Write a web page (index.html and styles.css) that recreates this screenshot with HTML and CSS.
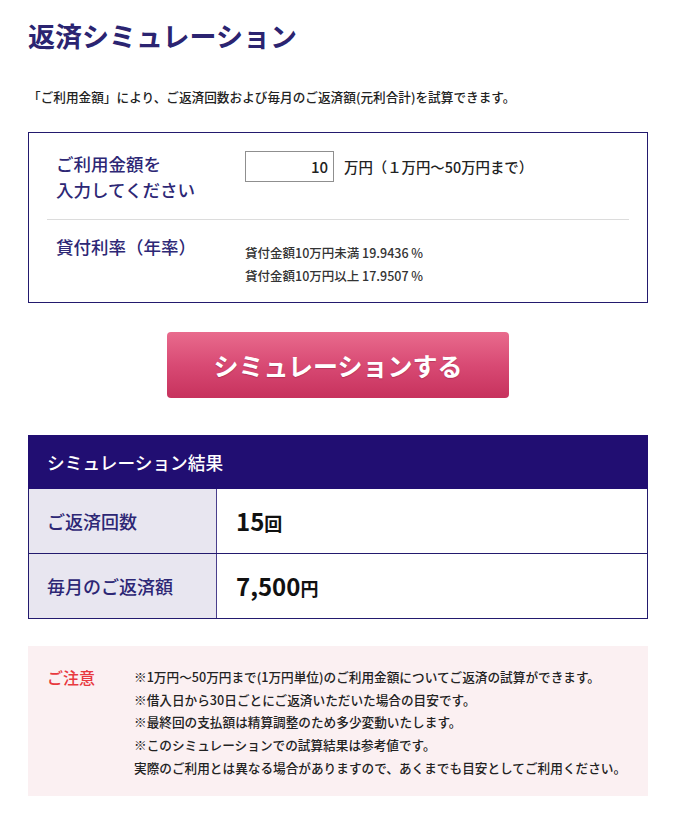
FILE: index.html
```html
<!DOCTYPE html>
<html lang="ja">
<head>
<meta charset="utf-8">
<title>返済シミュレーション</title>
<link rel="stylesheet" href="styles.css">
</head>
<body>
<div class="page">
  <h1 class="title">返済シミュレーション</h1>
  <p class="lead">「ご利用金額」により、ご返済回数および毎月のご返済額(元利合計)を試算できます。</p>

  <div class="form-box">
    <div class="form-row first">
      <div class="form-label">ご利用金額を<br>入力してください</div>
      <div class="form-field">
        <input class="amount" type="text" value="10">
        <span class="unit">万円（１万円〜50万円まで）</span>
      </div>
    </div>
    <div class="form-row second">
      <div class="form-label">貸付利率（年率）</div>
      <div class="rates">
        <div>貸付金額10万円未満 19.9436 %</div>
        <div>貸付金額10万円以上 17.9507 %</div>
      </div>
    </div>
  </div>

  <div class="btn-wrap">
    <button class="sim-btn" type="button">シミュレーションする</button>
  </div>

  <div class="result">
    <div class="result-head">シミュレーション結果</div>
    <div class="result-row">
      <div class="result-label">ご返済回数</div>
      <div class="result-value"><span class="num">15</span><span class="suffix">回</span></div>
    </div>
    <div class="result-row">
      <div class="result-label">毎月のご返済額</div>
      <div class="result-value"><span class="num">7,500</span><span class="suffix">円</span></div>
    </div>
  </div>

  <div class="notice">
    <div class="notice-title">ご注意</div>
    <div class="notice-body">
      <div>※1万円〜50万円まで(1万円単位)のご利用金額についてご返済の試算ができます。</div>
      <div>※借入日から30日ごとにご返済いただいた場合の目安です。</div>
      <div>※最終回の支払額は精算調整のため多少変動いたします。</div>
      <div>※このシミュレーションでの試算結果は参考値です。</div>
      <div>実際のご利用とは異なる場合がありますので、あくまでも目安としてご利用ください。</div>
    </div>
  </div>
</div>
</body>
</html>
```

FILE: styles.css
```css
* { box-sizing: border-box; }
html, body {
  margin: 0;
  padding: 0;
  background: #fff;
}
body {
  font-family: "Noto Sans CJK JP", "Noto Sans", sans-serif;
  color: #222;
}
.page {
  width: 620px;
  margin-left: 28px;
  padding-top: 16px;
}
.title {
  margin: 0;
  font-size: 27px;
  line-height: 40px;
  font-weight: 700;
  color: #2b2471;
}
.lead {
  margin: 32px 0 0;
  font-size: 12.65px;
  line-height: 18px;
  font-weight: 500;
  color: #222;
}
.form-box {
  margin-top: 26px;
  border: 1px solid #231a6e;
  padding: 0 18px;
}
.form-row {
  display: flex;
  align-items: flex-start;
}
.form-row.first {
  padding: 18px 0 16px;
  border-bottom: 1px solid #dcdcdc;
}
.form-row.second {
  padding: 14px 0 15px;
}
.form-label {
  width: 198px;
  flex: none;
  padding-left: 9px;
  font-size: 17.5px;
  line-height: 26px;
  font-weight: 500;
  color: #2d2775;
}
.form-field {
  display: flex;
  align-items: center;
  gap: 10px;
}
.amount {
  width: 89px;
  height: 31px;
  border: 1px solid #8f8f8f;
  padding: 0 5px;
  text-align: right;
  font-family: "Noto Sans CJK JP", "Noto Sans", sans-serif;
  font-size: 15px;
  font-weight: 500;
  color: #222;
  background: #fff;
  outline: none;
}
.unit {
  font-size: 14.4px;
  font-weight: 500;
  color: #222;
}
.rates {
  margin-top: 7px;
  font-size: 12.5px;
  line-height: 23px;
  font-weight: 500;
  color: #333;
}
.btn-wrap {
  display: flex;
  justify-content: center;
  margin-top: 29px;
  padding-right: 1px;
}
.sim-btn {
  width: 342px;
  height: 66px;
  margin-left: 1px;
  border: none;
  border-radius: 4px;
  background: linear-gradient(to bottom, #e96b8d 0%, #d84a74 50%, #c7325d 100%);
  color: #fff;
  font-family: "Noto Sans CJK JP", "Noto Sans", sans-serif;
  font-size: 25px;
  font-weight: 700;
  text-shadow: 0 1px 1px rgba(120, 20, 50, 0.35);
  cursor: pointer;
}
.result {
  margin-top: 37px;
  border: 1px solid #231a6e;
  border-top: none;
}
.result-head {
  height: 54px;
  background: #210e72;
  color: #fff;
  font-size: 17.7px;
  font-weight: 500;
  line-height: 54px;
  margin: 0 -1px;
  padding-left: 19px;
}
.result-row {
  display: flex;
  height: 65px;
  border-bottom: 1px solid #231a6e;
}
.result-row:last-child {
  border-bottom: none;
  height: 64px;
}
.result-label {
  width: 188px;
  flex: none;
  background: #e8e6f0;
  border-right: 1px solid #4a3f8c;
  display: flex;
  align-items: center;
  padding-left: 18px;
  font-size: 18px;
  font-weight: 500;
  color: #2d2775;
}
.result-value {
  display: flex;
  align-items: baseline;
  padding-left: 19px;
  padding-top: 17px;
  color: #111;
  font-weight: 700;
}
.num {
  font-size: 24px;
  line-height: 30px;
}
.suffix {
  font-size: 18px;
}
.notice {
  margin-top: 27px;
  background: #fbf0f2;
  display: flex;
  padding: 20px 19px 16px;
}
.notice-title {
  width: 87px;
  flex: none;
  font-size: 16px;
  line-height: 22px;
  font-weight: 500;
  color: #e8393f;
}
.notice-body {
  font-size: 12.65px;
  line-height: 22.7px;
  font-weight: 500;
  color: #222;
}
```
